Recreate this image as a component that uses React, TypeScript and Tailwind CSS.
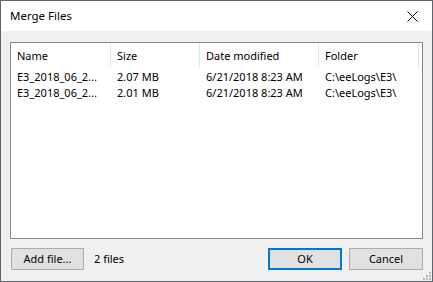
import React from "react";

const cols = [
  { label: "Name", w: "w-[100px]" },
  { label: "Size", w: "w-[89px]" },
  { label: "Date modified", w: "w-[119px]" },
  { label: "Folder", w: "w-[100px]" },
];

const rows = [
  ["E3_2018_06_2...", "2.07 MB", "6/21/2018 8:23 AM", "C:\\eeLogs\\E3\\"],
  ["E3_2018_06_2...", "2.01 MB", "6/21/2018 8:23 AM", "C:\\eeLogs\\E3\\"],
];

export default function App() {
  return (
    <div
      className="w-[433px] h-[282px] border border-[#5b6670] bg-[#f0f0f0] flex flex-col text-[11px] text-black overflow-hidden"
      style={{ fontFamily: '"Segoe UI", "Noto Sans", sans-serif' }}
    >
      <div className="h-[30px] bg-white flex items-center justify-between pl-[9px] pr-[14px] shrink-0">
        <span className="text-[11.5px] leading-none">Merge Files</span>
        <svg width="11" height="11" viewBox="0 0 11 11">
          <path d="M0.5 0.5 L10.5 10.5 M10.5 0.5 L0.5 10.5" stroke="#000" strokeWidth="1" fill="none" />
        </svg>
      </div>
      <div className="flex-1 flex flex-col px-[9px] pt-[11px]">
        <div className="h-[197px] w-[413px] border border-[#828790] bg-white flex flex-col">
          <div className="flex h-[25px] pt-[1px]">
            {cols.map((c, i) => (
              <div
                key={i}
                className={`${c.w} h-[23px] flex items-center pl-[6px] pt-[2px] border-r border-[#e5e5e5]`}
              >
                {c.label}
              </div>
            ))}
          </div>
          <div className="pt-[1px]">
            {rows.map((r, i) => (
              <div key={i} className="flex h-[16px] items-center">
                {r.map((t, j) => (
                  <div key={j} className={`${cols[j].w} pl-[6px] whitespace-nowrap`}>
                    {t}
                  </div>
                ))}
              </div>
            ))}
          </div>
        </div>
        <div className="flex items-center mt-[9px] h-[22px]">
          <button className="w-[73px] h-[22px] bg-[#e1e1e1] border border-[#adadad] flex items-center justify-center ml-[1px]">
            Add file...
          </button>
          <span className="ml-[10px]">2 files</span>
          <div className="flex-1" />
          <button className="w-[74px] h-[22px] bg-[#e1e1e1] border-2 border-[#0078d7] flex items-center justify-center">
            OK
          </button>
          <button className="w-[74px] h-[22px] bg-[#e1e1e1] border border-[#adadad] flex items-center justify-center ml-[7px]">
            Cancel
          </button>
        </div>
        <div className="flex justify-end mt-[2px] -mr-[8px]">
          <svg width="8" height="8" viewBox="0 0 8 8">
            <rect x="6" y="0" width="2" height="2" fill="#b8b8b8" />
            <rect x="3" y="3" width="2" height="2" fill="#b8b8b8" />
            <rect x="6" y="3" width="2" height="2" fill="#b8b8b8" />
            <rect x="0" y="6" width="2" height="2" fill="#b8b8b8" />
            <rect x="3" y="6" width="2" height="2" fill="#b8b8b8" />
            <rect x="6" y="6" width="2" height="2" fill="#b8b8b8" />
          </svg>
        </div>
      </div>
    </div>
  );
}
